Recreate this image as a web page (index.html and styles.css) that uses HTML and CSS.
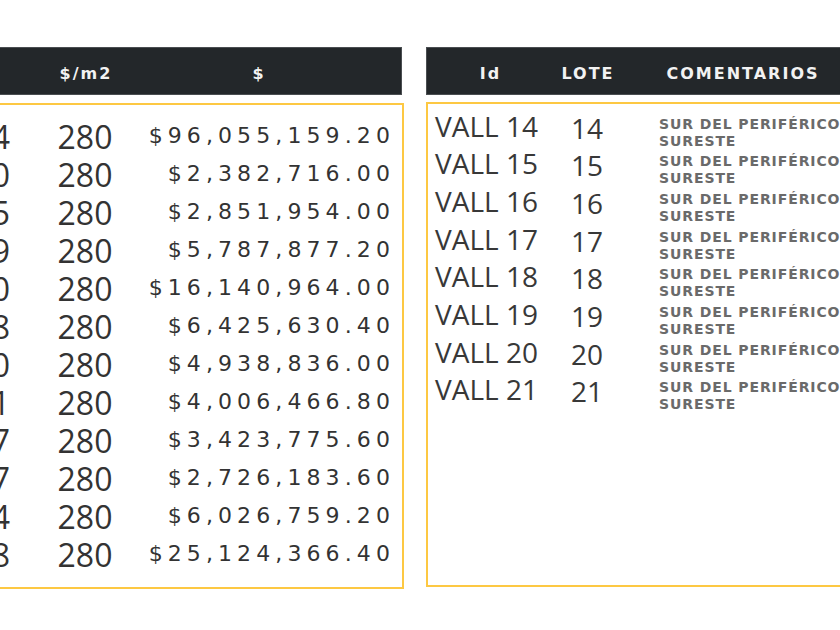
FILE: index.html
```html
<!DOCTYPE html>
<html lang="es">
<head>
<meta charset="utf-8">
<title>Lotes</title>
<link rel="stylesheet" href="styles.css">
</head>
<body>
<div class="page">
  <section class="panel panel-left">
    <div class="head head-left">
      <div class="hcell">m2</div>
      <div class="hcell">$/m2</div>
      <div class="hcell hcell-price">$</div>
    </div>
    <div class="box box-left">
      <div class="lrow"><span class="area">343,054.14</span><span class="rate">280</span><span class="price">$96,055,159.20</span></div>
      <div class="lrow"><span class="area">8,509.70</span><span class="rate">280</span><span class="price">$2,382,716.00</span></div>
      <div class="lrow"><span class="area">10,185.55</span><span class="rate">280</span><span class="price">$2,851,954.00</span></div>
      <div class="lrow"><span class="area">20,670.99</span><span class="rate">280</span><span class="price">$5,787,877.20</span></div>
      <div class="lrow"><span class="area">57,646.30</span><span class="rate">280</span><span class="price">$16,140,964.00</span></div>
      <div class="lrow"><span class="area">22,948.68</span><span class="rate">280</span><span class="price">$6,425,630.40</span></div>
      <div class="lrow"><span class="area">17,638.70</span><span class="rate">280</span><span class="price">$4,938,836.00</span></div>
      <div class="lrow"><span class="area">14,308.81</span><span class="rate">280</span><span class="price">$4,006,466.80</span></div>
      <div class="lrow"><span class="area">12,227.77</span><span class="rate">280</span><span class="price">$3,423,775.60</span></div>
      <div class="lrow"><span class="area">9,736.37</span><span class="rate">280</span><span class="price">$2,726,183.60</span></div>
      <div class="lrow"><span class="area">21,524.14</span><span class="rate">280</span><span class="price">$6,026,759.20</span></div>
      <div class="lrow"><span class="area">89,729.88</span><span class="rate">280</span><span class="price">$25,124,366.40</span></div>
    </div>
  </section>
  <section class="panel panel-right">
    <div class="head head-right">
      <div class="hcell">Id</div>
      <div class="hcell">LOTE</div>
      <div class="hcell">COMENTARIOS</div>
    </div>
    <div class="box box-right">
      <div class="rrow"><span class="rid">VALL 14</span><span class="lote">14</span><span class="com">SUR DEL PERIFÉRICO<br>SURESTE</span></div>
      <div class="rrow"><span class="rid">VALL 15</span><span class="lote">15</span><span class="com">SUR DEL PERIFÉRICO<br>SURESTE</span></div>
      <div class="rrow"><span class="rid">VALL 16</span><span class="lote">16</span><span class="com">SUR DEL PERIFÉRICO<br>SURESTE</span></div>
      <div class="rrow"><span class="rid">VALL 17</span><span class="lote">17</span><span class="com">SUR DEL PERIFÉRICO<br>SURESTE</span></div>
      <div class="rrow"><span class="rid">VALL 18</span><span class="lote">18</span><span class="com">SUR DEL PERIFÉRICO<br>SURESTE</span></div>
      <div class="rrow"><span class="rid">VALL 19</span><span class="lote">19</span><span class="com">SUR DEL PERIFÉRICO<br>SURESTE</span></div>
      <div class="rrow"><span class="rid">VALL 20</span><span class="lote">20</span><span class="com">SUR DEL PERIFÉRICO<br>SURESTE</span></div>
      <div class="rrow"><span class="rid">VALL 21</span><span class="lote">21</span><span class="com">SUR DEL PERIFÉRICO<br>SURESTE</span></div>
    </div>
  </section>
</div>
</body>
</html>
```
FILE: styles.css
```css
* { box-sizing: border-box; }

html, body {
  margin: 0;
  padding: 0;
  width: 840px;
  height: 630px;
  overflow: hidden;
  background: #ffffff;
}

.page {
  display: flex;
  gap: 22px;
  padding-top: 47px;
  font-family: "DejaVu Sans", sans-serif;
  color: #333333;
}

.panel {
  display: flex;
  flex-direction: column;
  flex: none;
}

.panel-left {
  width: 604px;
  margin-left: -200px;
  gap: 8px;
}

.panel-right {
  width: 440px;
  gap: 7px;
}

.head {
  display: grid;
  height: 48px;
  background: #23272a;
  border: 1px solid #4a4e51;
  align-items: center;
  padding-top: 4px;
}

.head-left {
  width: 602px;
  grid-template-columns: 239px 90px 1fr;
}

.head-right {
  grid-template-columns: 125px 70px 240px;
}

.hcell {
  font-family: "DejaVu Sans", sans-serif;
  font-weight: bold;
  font-size: 16px;
  letter-spacing: 2px;
  color: #f2f2f2;
  text-align: center;
  text-indent: 2px;
  white-space: nowrap;
}

.hcell-price {
  padding-right: 15px;
}

.box {
  border: 2px solid #fdc843;
  background: #ffffff;
}

.box-left {
  height: 486px;
  padding-top: 12.5px;
}

.box-right {
  height: 485px;
  padding-top: 11.5px;
}

.lrow {
  display: grid;
  grid-template-columns: 238px 90px 272px;
  height: 38px;
  line-height: 38px;
  white-space: nowrap;
}

.area, .rate {
  font-family: "Open Sans", sans-serif;
  font-size: 32px;
  color: #333333;
}

.area {
  text-align: right;
  padding-right: 30px;
}

.rate {
  text-align: center;
}

.price {
  font-family: "DejaVu Sans", sans-serif;
  font-size: 22px;
  letter-spacing: 5.1px;
  color: #333333;
  text-align: right;
  padding-right: 7px;
  line-height: 36px;
}

.rrow {
  display: grid;
  grid-template-columns: 124px 70px 240px;
  height: 37.7px;
  align-items: start;
  white-space: nowrap;
}

.rid {
  font-family: "Open Sans", sans-serif;
  font-size: 28px;
  line-height: 21px;
  color: #383838;
  padding-left: 7px;
}

.lote {
  font-family: "Open Sans", sans-serif;
  font-size: 28px;
  line-height: 24px;
  color: #383838;
  text-align: center;
}

.com {
  font-family: "DejaVu Sans", sans-serif;
  font-weight: bold;
  font-size: 14px;
  line-height: 17px;
  letter-spacing: 0.9px;
  color: #6a6a6a;
  padding-left: 37px;
}
```
